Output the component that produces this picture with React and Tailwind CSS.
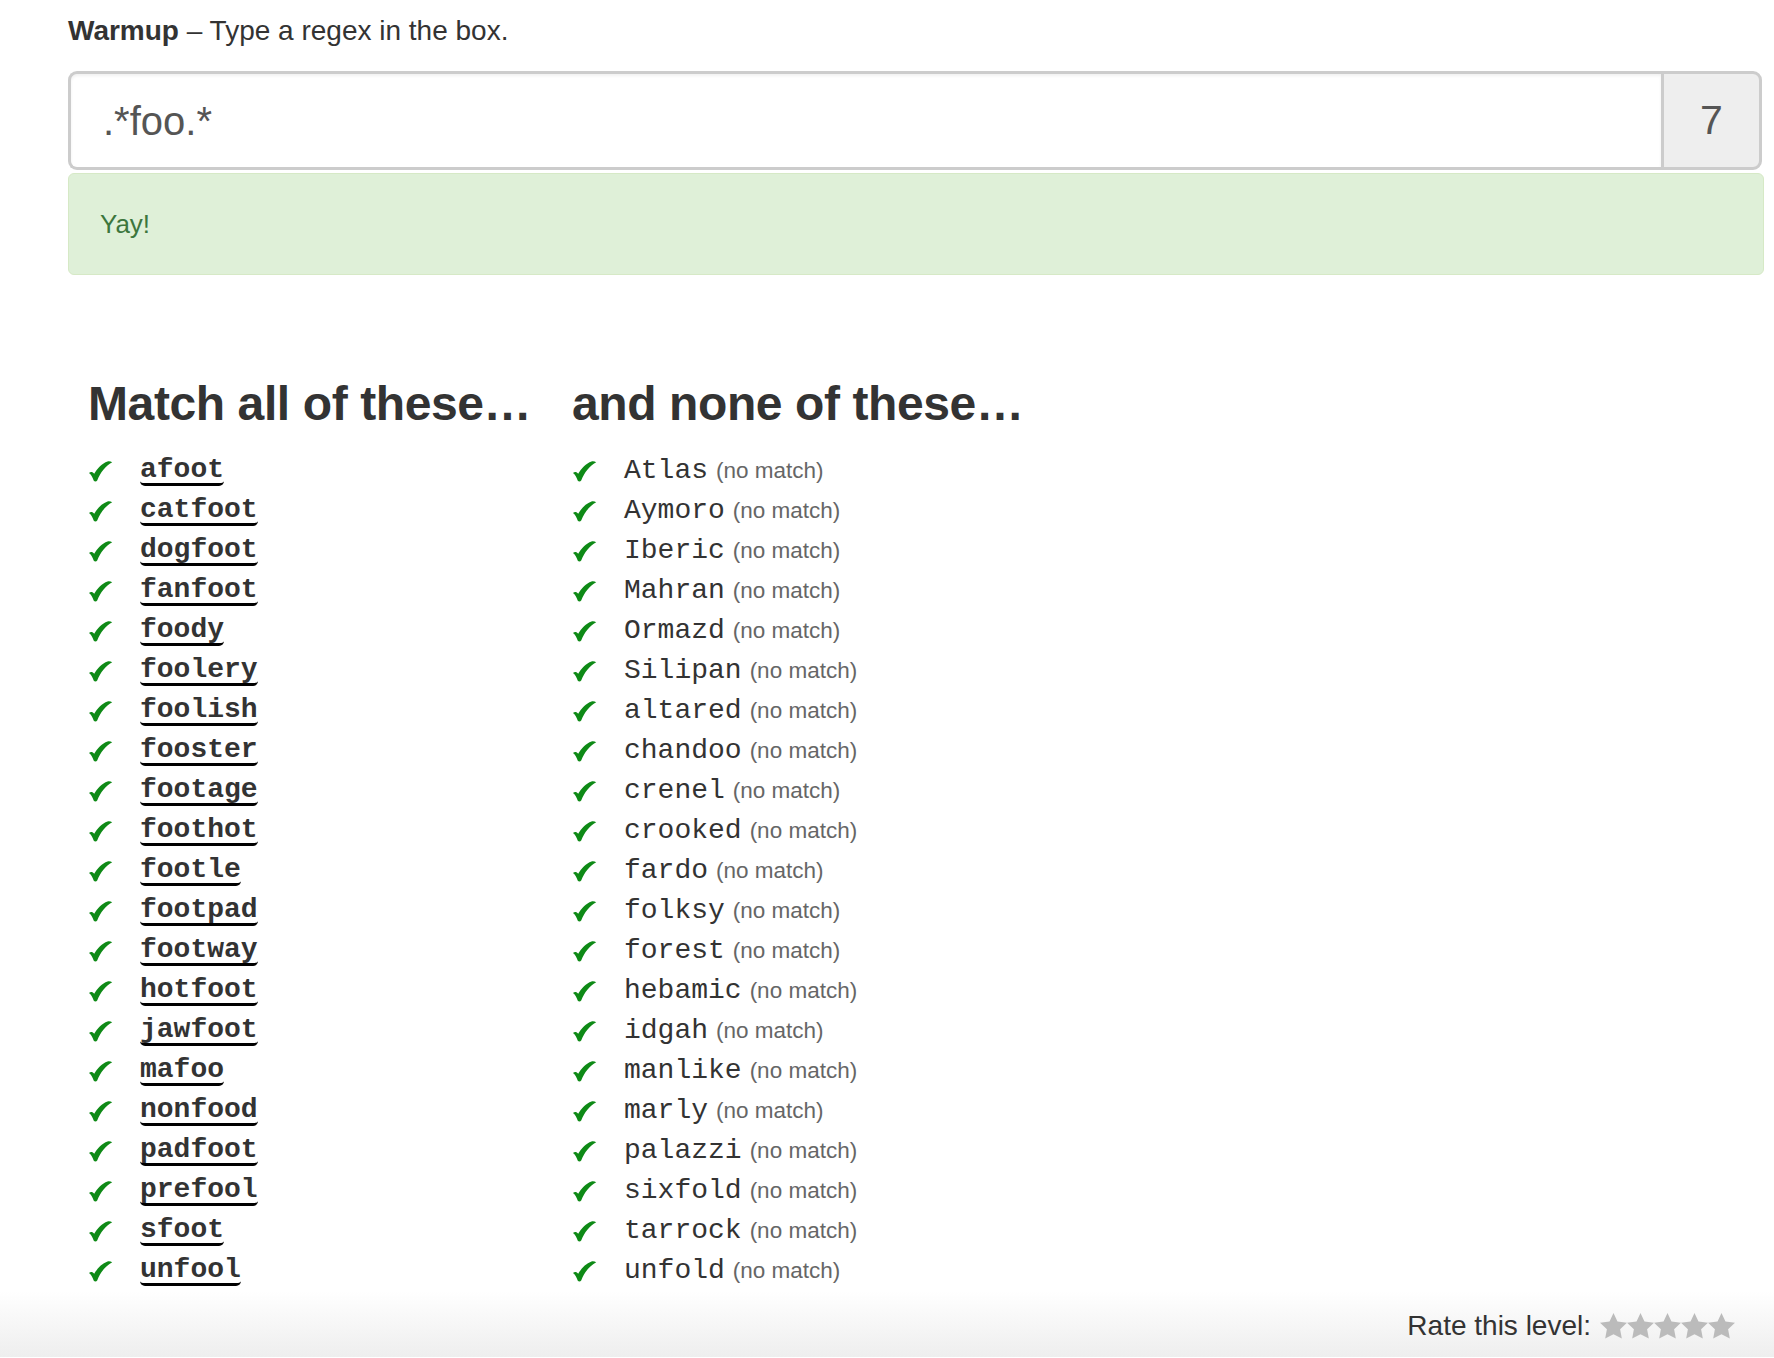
const SANS = "font-['Liberation_Sans',Arial,sans-serif]";

// Les deux colonnes ont le même nombre de lignes : on les garde alignées.
const MATCHES = [
  "afoot", "catfoot", "dogfoot", "fanfoot", "foody", "foolery", "foolish",
  "fooster", "footage", "foothot", "footle", "footpad", "footway", "hotfoot",
  "jawfoot", "mafoo", "nonfood", "padfoot", "prefool", "sfoot", "unfool",
];

const NON_MATCHES = [
  "Atlas", "Aymoro", "Iberic", "Mahran", "Ormazd", "Silipan", "altared",
  "chandoo", "crenel", "crooked", "fardo", "folksy", "forest", "hebamic",
  "idgah", "manlike", "marly", "palazzi", "sixfold", "tarrock", "unfold",
];

const Check = () => (
  <span className="w-[52px] shrink-0">
    <svg width="25" height="21" viewBox="0 0 25 21" className="block">
      <path
        d="M1 12 C2.5 10.5 4.5 10.3 6.2 12.8 C9.5 7 14 2.5 19.5 0.5 C21 0 23 0.5 24.2 1.2 C17.5 5 12.5 11 9.2 19.6 C8.4 20.8 6.6 20.8 5.8 19.8 C4.5 16 3 13.5 1 12 Z"
        fill="#0e8a16"
      />
    </svg>
  </span>
);

const Star = () => (
  <svg width="27" height="26" viewBox="2 2 20 19.3" className="block">
    <path
      d="M12 2l2.94 6.26L22 9.27l-5.1 4.87 1.28 6.88L12 17.77l-6.18 3.25 1.28-6.88L2 9.27l7.06-1.01L12 2z"
      fill="#bbbbbb"
    />
  </svg>
);

const Column = ({ title, words, matched }) => (
  <div className={matched ? "w-[484px]" : ""}>
    <h2 className={`${SANS} h-[56px] text-[48px] leading-[56px] font-bold tracking-[-0.4px] whitespace-nowrap text-[#333]`}>
      {title}
    </h2>
    <ul className="mt-[19px]">
      {words.map((word) => (
        <li key={word} className="flex h-[40px] items-center">
          <Check />
          {matched ? (
            <span className="inline-block rounded-[5px] border-b-[3px] border-black font-['Liberation_Mono','Courier_New',monospace] text-[28px] leading-[26px] font-bold text-[#333]">
              {word}
            </span>
          ) : (
            <span className="flex items-baseline">
              <span className="font-['Liberation_Mono','Courier_New',monospace] text-[28px] leading-[40px] text-[#333]">
                {word}
              </span>
              <span className={`${SANS} ml-[8px] text-[22.5px] text-[#666]`}>(no match)</span>
            </span>
          )}
        </li>
      ))}
    </ul>
  </div>
);

const App = () => {
  return (
    <div className={`${SANS} min-h-[1358px] bg-white text-[#333]`}>
      <div className="pt-[12px] pr-[12px] pl-[68px]">
        <p className="text-[28px] leading-[38px]">
          <b>Warmup</b> – Type a regex in the box.
        </p>

        <div className="mt-[21px] flex h-[99px]">
          <div className="flex flex-1 items-center rounded-l-[9px] border-[3px] border-r-0 border-[#ccc] bg-white pl-[32px] text-[40px] text-[#555] shadow-[inset_0_2px_3px_rgba(0,0,0,0.06)]">
            .*foo.*
          </div>
          <div className="flex w-[101px] items-center justify-center rounded-r-[9px] border-[3px] border-[#ccc] bg-[#eee] text-[41px] text-[#555]">
            7
          </div>
        </div>

        <div className="mt-[3px] mr-[-2px] flex h-[102px] items-center rounded-[6px] border border-[#d6e9c6] bg-[#dff0d8] pl-[31px] text-[26px] text-[#3c763d]">
          Yay!
        </div>

        {/* Les deux listes côte à côte, à la manière d'un tableau sans bordures. */}
        <div className="mt-[101px] flex pl-[20px]">
          <Column title="Match all of these…" words={MATCHES} matched />
          <Column title="and none of these…" words={NON_MATCHES} />
        </div>
      </div>

      <footer className="flex h-[66px] items-center justify-end bg-gradient-to-b from-white to-[#eeeeee] pt-[4px] pr-[39px]">
        <span className="text-[28px] text-[#333]">Rate this level:</span>
        <span className="ml-[9px] flex">
          {[0, 1, 2, 3, 4].map((i) => (
            <Star key={i} />
          ))}
        </span>
      </footer>
    </div>
  );
};

export default App;
